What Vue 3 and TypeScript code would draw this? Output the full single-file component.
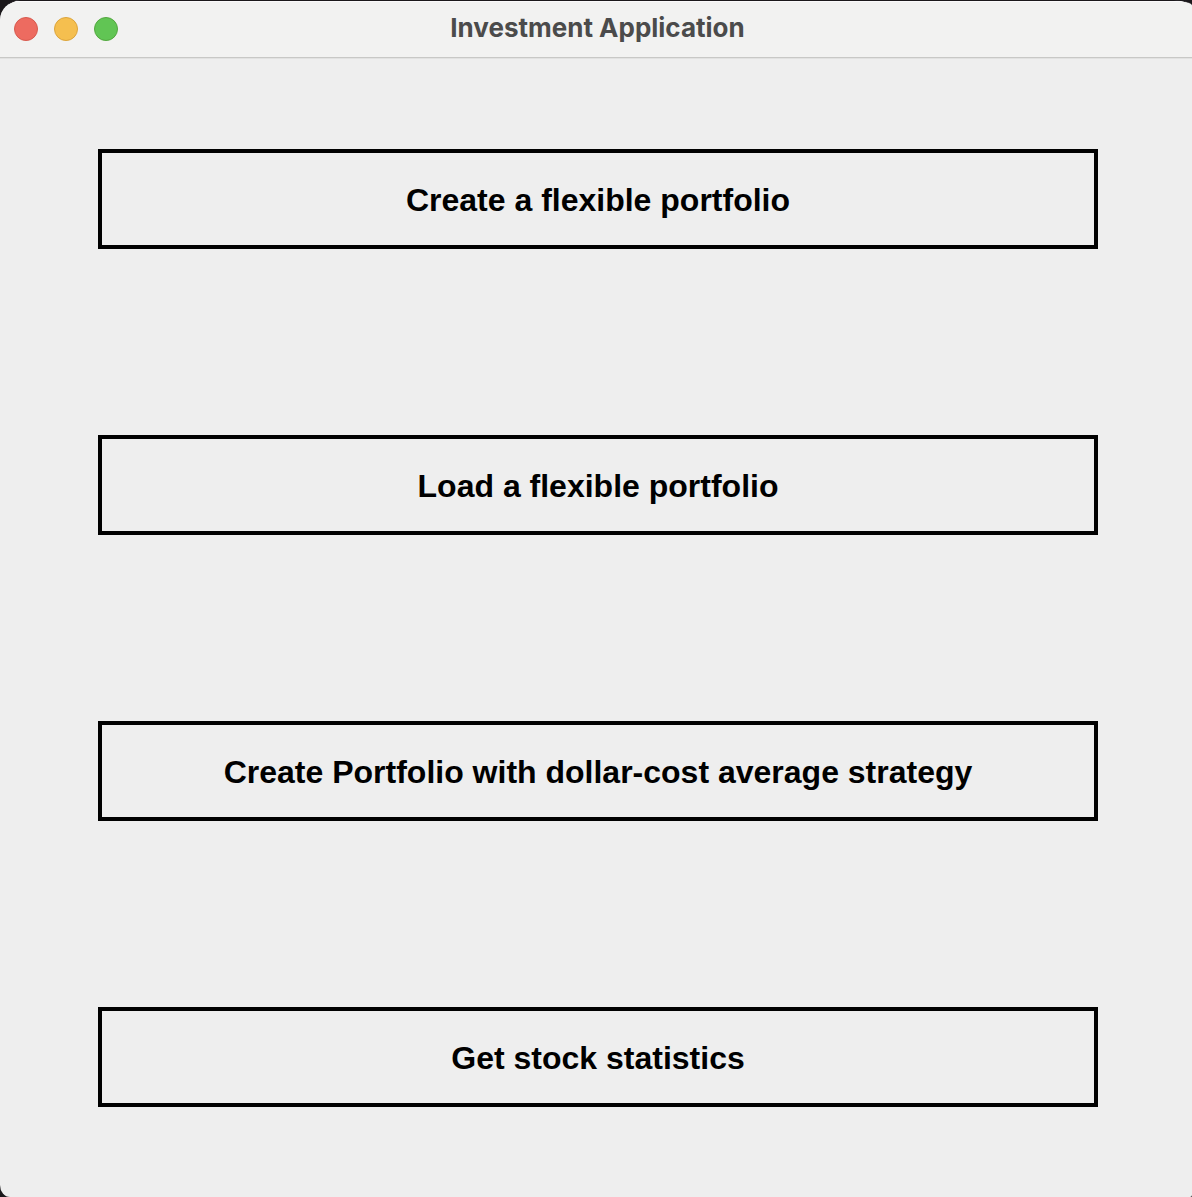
<script setup lang="ts">
const actions: string[] = [
  'Create a flexible portfolio',
  'Load a flexible portfolio',
  'Create Portfolio with dollar-cost average strategy',
  'Get stock statistics',
]
</script>

<template>
  <div class="window">
    <header class="titlebar">
      <div class="controls">
        <button class="light close" type="button" aria-label="Close"></button>
        <button class="light minimize" type="button" aria-label="Minimize"></button>
        <button class="light zoom" type="button" aria-label="Zoom"></button>
      </div>
      <h1 class="title">Investment Application</h1>
    </header>
    <main class="menu">
      <button v-for="action in actions" :key="action" class="action" type="button">{{ action }}</button>
    </main>
  </div>
</template>

<style>
body {
  margin: 0;
  background: #1b181b;
}
</style>

<style scoped>
.window {
  display: flex;
  flex-direction: column;
  min-height: 100vh;
  box-sizing: border-box;
  overflow: hidden;
  border-top: 1px solid #1b181b;
  border-radius: 20px 18px 2px 10px / 20px 6px 2px 12px;
  background: #eeeeee;
}

.titlebar {
  display: grid;
  grid-template-columns: 1fr auto 1fr;
  align-items: center;
  height: 57px;
  box-sizing: border-box;
  padding: 0 11px 2px 14px;
  border-top: 1px solid #fbfafb;
  border-bottom: 1px solid #c8c8c6;
  background: #f2f2f1;
}

.controls {
  display: flex;
  gap: 16px;
}

.light {
  width: 24px;
  height: 24px;
  box-sizing: border-box;
  padding: 0;
  border: 1px solid;
  border-radius: 50%;
}

.close {
  border-color: #d75a4e;
  background: #ed6b60;
}

.minimize {
  border-color: #dba43c;
  background: #f5bf4f;
}

.zoom {
  border-color: #53a73f;
  background: #61c554;
}

.title {
  margin: 0;
  padding-bottom: 2px;
  color: #4b4b4b;
  font: 700 26px/32px Inter, sans-serif;
}

.menu {
  display: flex;
  flex: 1;
  flex-direction: column;
  justify-content: space-between;
  padding: 90px 94px 90px 98px;
  border-top: 1px solid #e2e2e1;
}

.action {
  height: 100px;
  box-sizing: border-box;
  padding: 2px 16px 0;
  border: 4px solid #000000;
  border-radius: 0;
  background: #eeeeee;
  color: #000000;
  font: 700 32px/40px "Liberation Sans", Arial, sans-serif;
}
</style>
